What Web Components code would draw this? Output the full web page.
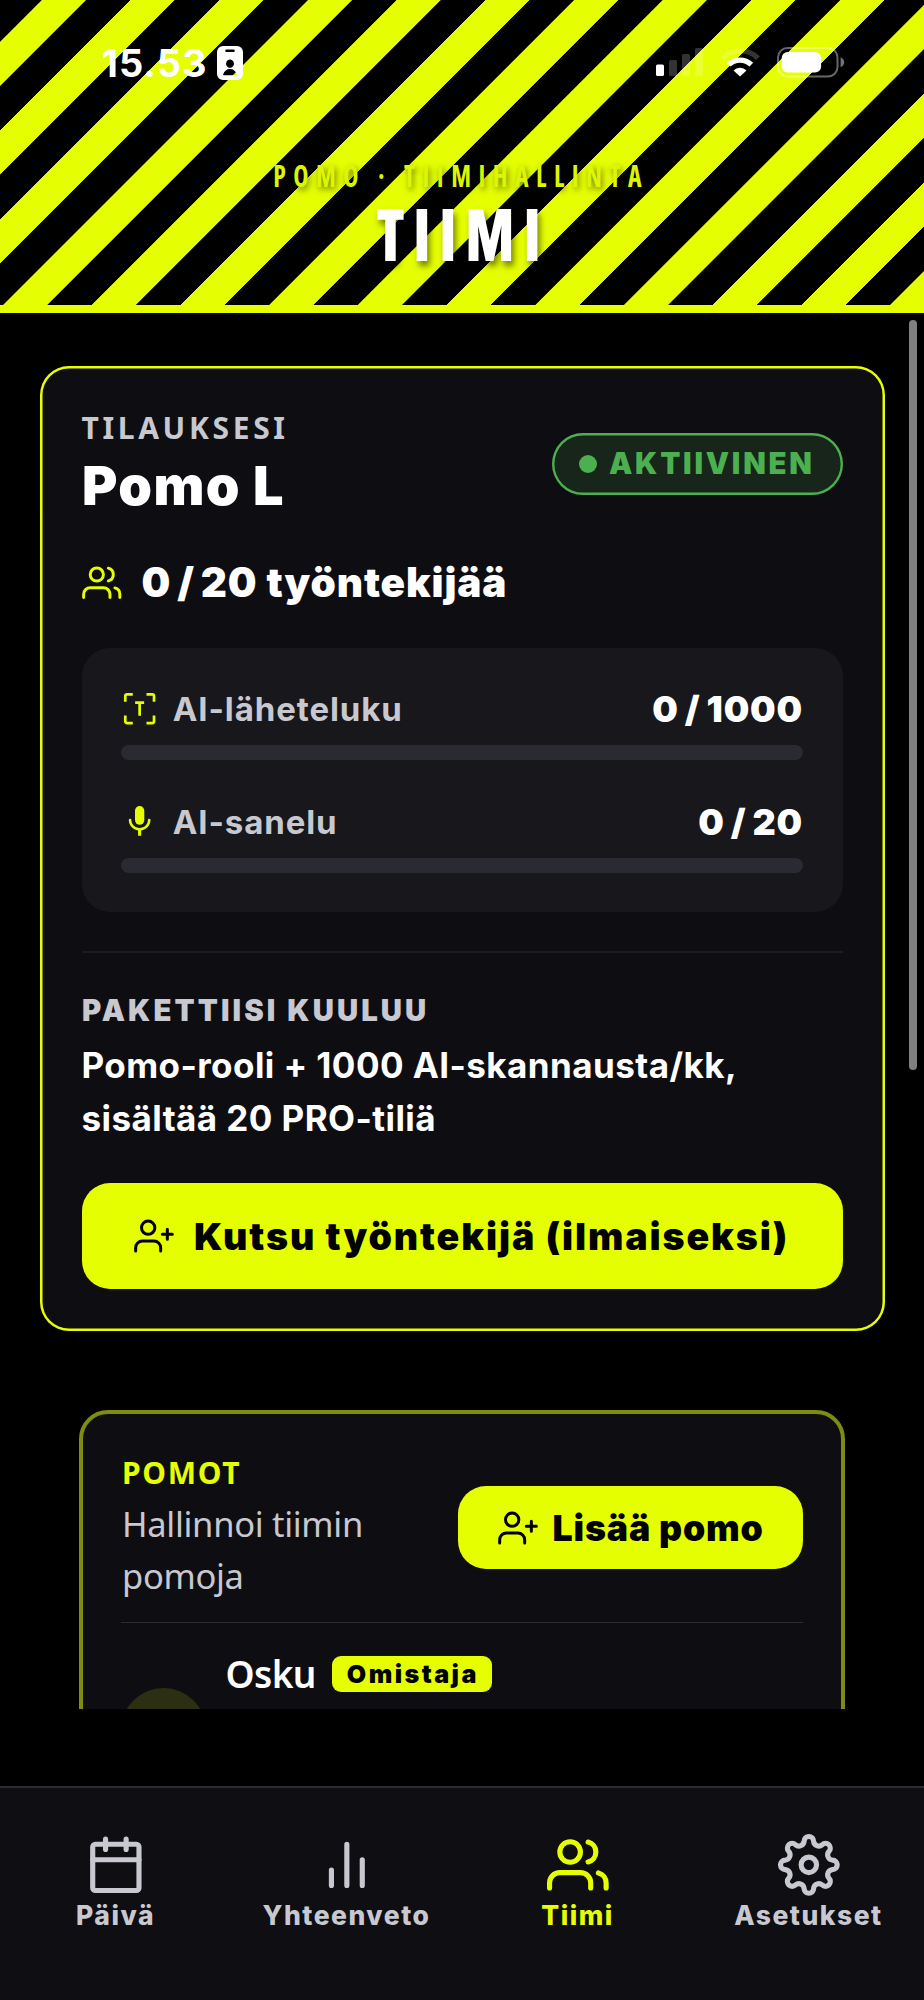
<!DOCTYPE html>
<html lang="fi">
<head>
<meta charset="utf-8">
<title>Tiimi</title>
<style>
  html, body { margin: 0; background: #000; }
  body { font-family: Inter, "Liberation Sans", sans-serif; color: #fff; }
</style>
</head>
<body>
<team-app></team-app>
<script>
const define = (name, html, setup) => {
  const template = document.createElement('template');
  template.innerHTML = html;
  customElements.define(name, class extends HTMLElement {
    constructor() {
      super();
      this.attachShadow({ mode: 'open' }).append(template.content.cloneNode(true));
    }
    connectedCallback() { if (setup) setup(this, this.shadowRoot); }
  });
};

/* Eight-lobed gear outline made of alternating tangent arcs */
const gearPath = () => {
  const rot = (x, y, deg) => {
    const t = deg * Math.PI / 180;
    return (12 + x * Math.cos(t) - y * Math.sin(t)).toFixed(2) + ' ' + (12 + x * Math.sin(t) + y * Math.cos(t)).toFixed(2);
  };
  let d = 'M' + rot(-1.85, -9.19, 0);
  for (let k = 0; k < 8; k++) {
    d += 'A1.85 1.85 0 0 1 ' + rot(1.85, -9.19, k * 45);
    d += 'A2.03 2.03 0 0 0 ' + rot(-1.85, -9.19, (k + 1) * 45);
  }
  return d + 'Z';
};

const ICONS = {
  users: '<path d="M17 21v-2a4 4 0 0 0-4-4H5a4 4 0 0 0-4 4v2"/><circle cx="9" cy="7" r="4"/><path d="M23 21v-2a4 4 0 0 0-3-3.87"/><path d="M16 3.13a4 4 0 0 1 0 7.75"/>',
  userPlus: '<path d="M16 21v-2a4 4 0 0 0-4-4H5a4 4 0 0 0-4 4v2"/><circle cx="8.5" cy="7" r="4"/><path d="M20 8v6M23 11h-6"/>',
  calendar: '<rect x="3" y="4" width="18" height="18" rx="1"/><path d="M16 2v4M8 2v4M3 10h18"/>',
  bars: '<path d="M18 20V10M12 20V4M6 20v-6"/>',
  gear: '<circle cx="12" cy="12" r="3"/><path d="' + gearPath() + '"/>',
  scan: '<path d="M2.75 7.6V3.9a1.15 1.15 0 0 1 1.15-1.15H7.6M16.4 2.75h3.7a1.15 1.15 0 0 1 1.15 1.15V7.6M21.25 16.4v3.7a1.15 1.15 0 0 1-1.15 1.15H16.4M7.6 21.25H3.9a1.15 1.15 0 0 1-1.15-1.15V16.4M9.1 8.100H14.900M12 8.1V16.500" stroke-linecap="butt"/>',
  mic: '<g fill="currentColor" stroke="none"><rect x="9" y="2" width="6" height="12" rx="3"/><path d="M17.3 11c0 3-2.54 5.1-5.3 5.1S6.7 14 6.7 11a.85.85 0 0 0-1.7 0c0 3.41 2.72 6.23 6 6.72V21h2v-3.28c3.28-.48 6-3.3 6-6.72a.85.85 0 0 0-1.7 0z"/></g>'
};

customElements.define('app-icon', class extends HTMLElement {
  static observedAttributes = ['name', 'stroke'];
  constructor() {
    super();
    this.attachShadow({ mode: 'open' }).innerHTML = `
      <style>
        :host { display: block; flex: none; width: var(--size, 40px); height: var(--size, 40px); }
        svg { display: block; width: 100%; height: 100%; fill: none; stroke: currentColor; stroke-linecap: round; stroke-linejoin: round; overflow: visible; }
      </style>
      <svg viewBox="0 0 24 24"></svg>`;
  }
  attributeChangedCallback() {
    const svg = this.shadowRoot.querySelector('svg');
    svg.setAttribute('stroke-width', this.getAttribute('stroke') || '1.8');
    svg.innerHTML = ICONS[this.getAttribute('name')] || '';
  }
});

define('status-bar', `
  <style>
    :host { display: flex; align-items: center; justify-content: space-between; height: 126px; padding: 0 79px 0 101.500px; }
    .left { display: flex; align-items: center; gap: 9px; }
    .time { font: 750 38px/44px Inter, sans-serif; letter-spacing: 1px; margin-top: -1px; }
    svg { display: block; }
    .right { display: flex; align-items: center; gap: 17px; margin-top: -2px; }
  </style>
  <div class="left">
    <span class="time">15.53</span>
    <svg width="26" height="34" viewBox="0 0 26 34"><path fill="#fff" fill-rule="evenodd" d="M6 0h14a6 6 0 0 1 6 6v22a6 6 0 0 1-6 6H6a6 6 0 0 1-6-6V6a6 6 0 0 1 6-6ZM9.500 3.400a1.300 1.300 0 0 0 0 2.600h7a1.300 1.300 0 0 0 0-2.600ZM13 13.400a3.900 4.200 0 1 0 .01 0ZM6.800 29.300h12.400q1 0 .6-1C18.600 25 16.300 23 13 23s-5.600 2-6.800 5.300q-.4 1 .6 1Z"/></svg>
  </div>
  <div class="right">
    <svg width="47" height="30" viewBox="0 0 47 30" fill="#fff"><rect x="0" y="17.500" width="8" height="11.500" rx="1.600"/><g opacity=".2"><rect x="13" y="13" width="8" height="16" rx="1.600"/><rect x="26" y="7" width="8" height="22" rx="1.600"/><rect x="39" y="1" width="8" height="28" rx="1.600"/></g></svg>
    <svg width="40" height="30" viewBox="0 0 40 30" fill="none" stroke="#fff" stroke-width="5.200"><path opacity=".2" d="M2 11.200a25.500 25.500 0 0 1 36 0"/><path d="M8.700 17.700a16 16 0 0 1 22.600 0"/><path fill="#fff" stroke="none" d="M20 29.500l-6.500-6a9.300 9.300 0 0 1 13 0Z"/></svg>
    <svg width="68" height="31" viewBox="0 0 68 31" fill="none"><rect x="1" y="1" width="59.500" height="28.600" rx="9.500" stroke="#fff" stroke-opacity=".4" stroke-width="2"/><rect x="4.700" y="4.900" width="39.400" height="20.600" rx="6" fill="#fff"/><path d="M63.600 10.200q3.600 1.600 3.600 5t-3.600 5Z" fill="#fff" fill-opacity=".45"/></svg>
  </div>`);

define('team-header', `
  <style>
    :host { display: block; box-sizing: border-box; flex: none; height: 313px; border-bottom: 8px solid #e5ff00;
      background: repeating-linear-gradient(135deg, #000 0 29.4px, #e5ff00 29.9px 60.6px, #000 61.1px 62.72px); text-align: center; }
    .sub, .title { font-family: "Open Sans", Roboto, sans-serif; font-stretch: 75%; white-space: nowrap; display: flex; justify-content: center; }
    .sub { margin-top: 21px; font-size: 30.200px; line-height: 58px; font-weight: 700; color: #dcf602; text-shadow: 2px 3px 7px rgba(0,0,0,.5); }
    .title { font-size: 72.500px; line-height: 57px; font-weight: 800; text-shadow: 3px 5px 7px rgba(0,0,0,.5); }
    .sub span { transform: scaleX(.85); letter-spacing: 8.800px; margin-right: 1.800px; }
    .title span { transform: scaleX(.85); letter-spacing: 9.800px; margin-right: -2px; }
  </style>
  <status-bar></status-bar>
  <div class="sub"><span><slot name="sub"></slot></span></div>
  <div class="title"><span><slot></slot></span></div>`);

define('status-pill', `
  <style>
    :host { display: flex; align-items: center; box-sizing: border-box; width: 291px; height: 62px; padding-left: 27px; gap: 12.500px; border-radius: 31px;
      background: #17251a; box-shadow: inset 0 0 0 2.400px #4caf50; color: #4caf50; font: 900 29.400px/40px Inter, sans-serif; letter-spacing: 2.750px; white-space: nowrap; }
    i { flex: none; width: 18px; height: 18px; border-radius: 50%; background: currentColor; }
  </style>
  <i></i><slot></slot>`);

define('usage-row', `
  <style>
    :host { display: block; }
    .row { display: flex; align-items: center; height: 44px; }
    app-icon { color: #e5ff00; --size: 37.300px; }
    .label { margin-left: 14.500px; color: #c8c8d0; font: 720 33px/44px Inter, sans-serif; letter-spacing: .900px; }
    .value { margin-left: auto; font: 900 36px/44px Inter, sans-serif; letter-spacing: .850px; word-spacing: -2px; }
    .track { margin-top: 14px; height: 15px; border-radius: 7.500px; background: #2a2a33; }
  </style>
  <div class="row"><app-icon stroke="1.75"></app-icon><span class="label"><slot></slot></span><span class="value"><slot name="value"></slot></span></div>
  <div class="track"></div>`, (el, root) => {
  root.querySelector('app-icon').setAttribute('name', el.getAttribute('icon'));
});

define('accent-button', `
  <style>
    :host { display: flex; align-items: center; box-sizing: border-box; border-radius: 28px; background: #e5ff00; color: #000; white-space: nowrap; font-family: Inter, sans-serif; font-weight: 900; }
  </style>
  <app-icon name="userPlus"></app-icon><span><slot></slot></span>`);

define('subscription-card', `
  <style>
    :host { display: block; box-sizing: border-box; margin: 53px 39.500px 0 39.500px; height: 964.600px; padding: 37px 42px 0; border-radius: 29px; background: #0e0e12; box-shadow: inset 0 0 0 2.500px #e5ff00; }
    .head { display: flex; justify-content: space-between; height: 121px; }
    .eyebrow { color: #c8c8d0; font: 700 30px/50px "Noto Sans", sans-serif; letter-spacing: 3.650px; }
    .plan { margin-left: .5px; font: 900 54px/65px Inter, sans-serif; letter-spacing: 1.400px; }
    status-pill { align-self: center; }
    .seats { display: flex; align-items: center; margin-top: 39px; height: 40px; font: 900 40.500px/40px Inter, sans-serif; letter-spacing: .900px; }
    .seats b { font-weight: inherit; word-spacing: -3px; }
    .seats app-icon { --size: 39.500px; color: #e5ff00; margin-right: 20.500px; }
    .usage { margin-top: 45px; box-sizing: border-box; height: 264px; padding: 39px 39.500px; border-radius: 28px; background: #17171c; display: flex; flex-direction: column; gap: 40px; }
    hr { border: 0; margin: 39px 0 0; height: 2px; background: #1d1d21; }
    h3 { margin: 38px 0 0 .5px; color: #c8c8d0; font: 900 29.300px/40px Inter, sans-serif; letter-spacing: 3.100px; }
    p { margin: 8px 0 0; font: 650 35px/52.700px Inter, sans-serif; letter-spacing: .430px; white-space: nowrap; }
    accent-button { margin-top: 38.600px; height: 106px; padding-left: 52.500px; gap: 20px; font-size: 37.500px; letter-spacing: 1.900px; }
  </style>
  <div class="head">
    <div><div class="eyebrow">TILAUKSESI</div><div class="plan">Pomo L</div></div>
    <status-pill>AKTIIVINEN</status-pill>
  </div>
  <div class="seats"><app-icon name="users"></app-icon><span><b>0 / 20</b> työntekijää</span></div>
  <div class="usage">
    <usage-row icon="scan">AI-läheteluku<span slot="value">0 / 1000</span></usage-row>
    <usage-row icon="mic">AI-sanelu<span slot="value">0 / 20</span></usage-row>
  </div>
  <hr>
  <h3>PAKETTIISI KUULUU</h3>
  <p>Pomo-rooli + 1000 AI-skannausta/kk,<br>sisältää 20 PRO-tiliä</p>
  <accent-button>Kutsu työntekijä (ilmaiseksi)</accent-button>`);

define('bosses-card', `
  <style>
    :host { display: block; margin: 79.400px 79px 0; border: 4px solid #7e8d12; border-radius: 29px; padding: 39px 38px; background: #0e0e12; font-family: "Noto Sans", sans-serif; }
    .head { display: flex; align-items: center; justify-content: space-between; gap: 20px; }
    h3 { margin: 0 0 5px 1px; font-size: 30px; line-height: 40px; font-weight: 700; color: #e5ff00; letter-spacing: 1.700px; }
    p { margin: 0 0 0 1px; font-size: 34.500px; line-height: 52.500px; font-weight: 400; color: #c8c8d0; letter-spacing: -.3px; }
    accent-button { flex: none; width: 345px; height: 83px; padding-left: 40px; gap: 14.500px; font-size: 35.700px; letter-spacing: .850px; }
    hr { border: 0; margin: 19px 0 17px; height: 1px; background: #2c2c30; }
    .member { display: flex; align-items: center; gap: 19.500px; height: 181px; }
    .avatar { width: 85px; height: 85px; border-radius: 50%; background: #2c2f11; }
    .info { align-self: stretch; }
    .name { display: flex; align-items: center; height: 68px; gap: 16.500px; font-size: 37px; font-weight: 600; letter-spacing: -.6px; }
    .badge { display: flex; align-items: center; box-sizing: border-box; width: 160px; height: 36px; padding-left: 14.500px; border-radius: 9px; background: #e5ff00; color: #000; font: 900 25px/36px Inter, sans-serif; letter-spacing: 2.450px; }
  </style>
  <div class="head">
    <div><h3>POMOT</h3><p>Hallinnoi tiimin pomoja</p></div>
    <accent-button>Lisää pomo</accent-button>
  </div>
  <hr>
  <div class="member">
    <div class="avatar"></div>
    <div class="info"><div class="name"><span>Osku</span><span class="badge">Omistaja</span></div></div>
  </div>`);

define('nav-item', `
  <style>
    :host { display: flex; flex-direction: column; align-items: center; color: #c8c8d0; font: 800 26.500px/41px Inter, sans-serif; letter-spacing: 1.500px; }
    :host([active]) { color: #e5ff00; }
    app-icon { --size: 61.700px; }
    span { white-space: nowrap; margin-right: 0; }
  </style>
  <app-icon stroke="2"></app-icon><span><slot></slot></span>`, (el, root) => {
  root.querySelector('app-icon').setAttribute('name', el.getAttribute('icon'));
});

define('bottom-nav', `
  <style>
    :host { display: grid; grid-template-columns: repeat(4, minmax(0, 1fr)); box-sizing: border-box; height: 214px; padding-top: 45.700px; border-top: 2px solid #2c2c35; background: #0e0e13; }
  </style>
  <nav-item icon="calendar">Päivä</nav-item>
  <nav-item icon="bars">Yhteenveto</nav-item>
  <nav-item icon="users" active>Tiimi</nav-item>
  <nav-item icon="gear">Asetukset</nav-item>`);

define('team-app', `
  <style>
    :host { display: flex; flex-direction: column; width: 924px; height: 2000px; overflow: hidden; background: #000; }
    main { position: relative; height: 1396px; overflow: hidden; }
    .thumb { position: absolute; right: 7px; top: 7px; width: 8px; height: 750px; border-radius: 4px; background: #808080; }
    bottom-nav { margin-top: auto; }
  </style>
  <team-header><span slot="sub">POMO · TIIMIHALLINTA</span>TIIMI</team-header>
  <main>
    <subscription-card></subscription-card>
    <bosses-card></bosses-card>
    <div class="thumb"></div>
  </main>
  <bottom-nav></bottom-nav>`);
</script>
</body>
</html>
